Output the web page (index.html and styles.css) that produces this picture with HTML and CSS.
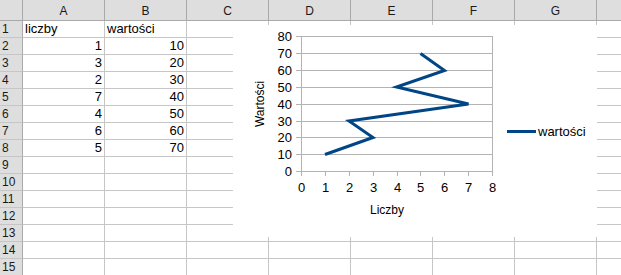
FILE: index.html
```html
<!DOCTYPE html>
<html>
<head>
<meta charset="utf-8">
<link rel="stylesheet" href="styles.css">
</head>
<body>
<div class="sheet">
  <div class="grid">
    <div class="corner"></div>
    <div class="colh">A</div><div class="colh">B</div><div class="colh">C</div><div class="colh">D</div><div class="colh">E</div><div class="colh">F</div><div class="colh">G</div><div class="colh"></div>

    <div class="rowh">1</div><div class="cell">liczby</div><div class="cell">wartości</div><div class="cell"></div><div class="cell"></div><div class="cell"></div><div class="cell"></div><div class="cell"></div><div class="cell"></div>
    <div class="rowh">2</div><div class="cell num">1</div><div class="cell num">10</div><div class="cell"></div><div class="cell"></div><div class="cell"></div><div class="cell"></div><div class="cell"></div><div class="cell"></div>
    <div class="rowh">3</div><div class="cell num">3</div><div class="cell num">20</div><div class="cell"></div><div class="cell"></div><div class="cell"></div><div class="cell"></div><div class="cell"></div><div class="cell"></div>
    <div class="rowh">4</div><div class="cell num">2</div><div class="cell num">30</div><div class="cell"></div><div class="cell"></div><div class="cell"></div><div class="cell"></div><div class="cell"></div><div class="cell"></div>
    <div class="rowh">5</div><div class="cell num">7</div><div class="cell num">40</div><div class="cell"></div><div class="cell"></div><div class="cell"></div><div class="cell"></div><div class="cell"></div><div class="cell"></div>
    <div class="rowh">6</div><div class="cell num">4</div><div class="cell num">50</div><div class="cell"></div><div class="cell"></div><div class="cell"></div><div class="cell"></div><div class="cell"></div><div class="cell"></div>
    <div class="rowh">7</div><div class="cell num">6</div><div class="cell num">60</div><div class="cell"></div><div class="cell"></div><div class="cell"></div><div class="cell"></div><div class="cell"></div><div class="cell"></div>
    <div class="rowh">8</div><div class="cell num">5</div><div class="cell num">70</div><div class="cell"></div><div class="cell"></div><div class="cell"></div><div class="cell"></div><div class="cell"></div><div class="cell"></div>
    <div class="rowh">9</div><div class="cell"></div><div class="cell"></div><div class="cell"></div><div class="cell"></div><div class="cell"></div><div class="cell"></div><div class="cell"></div><div class="cell"></div>
    <div class="rowh">10</div><div class="cell"></div><div class="cell"></div><div class="cell"></div><div class="cell"></div><div class="cell"></div><div class="cell"></div><div class="cell"></div><div class="cell"></div>
    <div class="rowh">11</div><div class="cell"></div><div class="cell"></div><div class="cell"></div><div class="cell"></div><div class="cell"></div><div class="cell"></div><div class="cell"></div><div class="cell"></div>
    <div class="rowh">12</div><div class="cell"></div><div class="cell"></div><div class="cell"></div><div class="cell"></div><div class="cell"></div><div class="cell"></div><div class="cell"></div><div class="cell"></div>
    <div class="rowh">13</div><div class="cell"></div><div class="cell"></div><div class="cell"></div><div class="cell"></div><div class="cell"></div><div class="cell"></div><div class="cell"></div><div class="cell"></div>
    <div class="rowh">14</div><div class="cell"></div><div class="cell"></div><div class="cell"></div><div class="cell"></div><div class="cell"></div><div class="cell"></div><div class="cell"></div><div class="cell"></div>
    <div class="rowh">15</div><div class="cell"></div><div class="cell"></div><div class="cell"></div><div class="cell"></div><div class="cell"></div><div class="cell"></div><div class="cell"></div><div class="cell"></div>
  </div>

  <div class="chart">
    <svg width="364" height="212" viewBox="233 25 364 212" xmlns="http://www.w3.org/2000/svg">
      <g class="grid-lines" stroke="#b3b3b3" stroke-width="1" fill="none">
        <path d="M296 36.5H492.5M296 53.5H492.5M296 70.5H492.5M296 87.5H492.5M296 104.5H492.5M296 121.5H492.5M296 137.5H492.5M296 154.5H492.5M296 171.5H492.5"/>
        <path d="M301.5 36V176M492.5 36V176"/>
        <path d="M325.5 171V176M349.5 171V176M373.5 171V176M397.5 171V176M420.5 171V176M444.5 171V176M468.5 171V176"/>
      </g>
      <g class="ylabels" font-family="Liberation Sans, Arial, sans-serif" font-size="13" fill="#000" text-anchor="end">
        <text x="292" y="41">80</text>
        <text x="292" y="58">70</text>
        <text x="292" y="75">60</text>
        <text x="292" y="92">50</text>
        <text x="292" y="109">40</text>
        <text x="292" y="126">30</text>
        <text x="292" y="142">20</text>
        <text x="292" y="159">10</text>
        <text x="292" y="176">0</text>
      </g>
      <g class="xlabels" font-family="Liberation Sans, Arial, sans-serif" font-size="13" fill="#000" text-anchor="middle">
        <text x="301.5" y="192">0</text>
        <text x="325.5" y="192">1</text>
        <text x="349.5" y="192">2</text>
        <text x="373.5" y="192">3</text>
        <text x="397.5" y="192">4</text>
        <text x="420.5" y="192">5</text>
        <text x="444.5" y="192">6</text>
        <text x="468.5" y="192">7</text>
        <text x="492.5" y="192">8</text>
      </g>
      <text x="387" y="214" font-family="Liberation Sans, Arial, sans-serif" font-size="12" text-anchor="middle" fill="#000">Liczby</text>
      <text x="0" y="0" transform="translate(264 104) rotate(-90)" font-family="Liberation Sans, Arial, sans-serif" font-size="12" text-anchor="middle" fill="#000">Wartości</text>
      <polyline points="325,154.5 373,137.5 349,121 468.5,104 396.5,87 444.5,70.5 420.5,53.5" fill="none" stroke="#004586" stroke-width="3" stroke-linejoin="miter"/>
      <line x1="507" y1="131.5" x2="536" y2="131.5" stroke="#004586" stroke-width="3"/>
      <text x="538" y="136" font-family="Liberation Sans, Arial, sans-serif" font-size="13" fill="#000">wartości</text>
    </svg>
  </div>
</div>
</body>
</html>
```

FILE: styles.css
```css
* { box-sizing: border-box; }
html, body { margin: 0; padding: 0; background: #ffffff; overflow: hidden; }
body { font-family: "Liberation Sans", Arial, sans-serif; font-size: 13px; color: #000; }

.sheet { position: relative; width: 621px; height: 275px; overflow: hidden; }

.grid {
  display: grid;
  grid-template-columns: 23px repeat(7, 82px) 82px;
  grid-template-rows: 21px repeat(15, 17px);
}

.corner {
  background: #dedede;
  border-right: 1px solid #a9a9a9;
  border-bottom: 1px solid #a9a9a9;
}

.colh {
  background: #dedede;
  border-right: 1px solid #a9a9a9;
  border-bottom: 1px solid #a9a9a9;
  display: flex;
  align-items: center;
  justify-content: center;
  font-size: 12px;
  color: #1a1a1a;
  padding-top: 1px;
}

.rowh {
  background: #dedede;
  border-right: 1px solid #a9a9a9;
  border-bottom: 1px solid #c6c6c6;
  display: flex;
  align-items: center;
  padding-left: 2px;
  font-size: 12px;
  color: #1a1a1a;
}

.cell {
  border-right: 1px solid #c6c6c6;
  border-bottom: 1px solid #c6c6c6;
  display: flex;
  align-items: center;
  padding: 0 2px;
  white-space: nowrap;
  line-height: 16px;
}

.cell.num { justify-content: flex-end; }

.chart {
  position: absolute;
  left: 233px;
  top: 25px;
  width: 364px;
  height: 212px;
  background: #ffffff;
}

.chart svg { display: block; }
```
